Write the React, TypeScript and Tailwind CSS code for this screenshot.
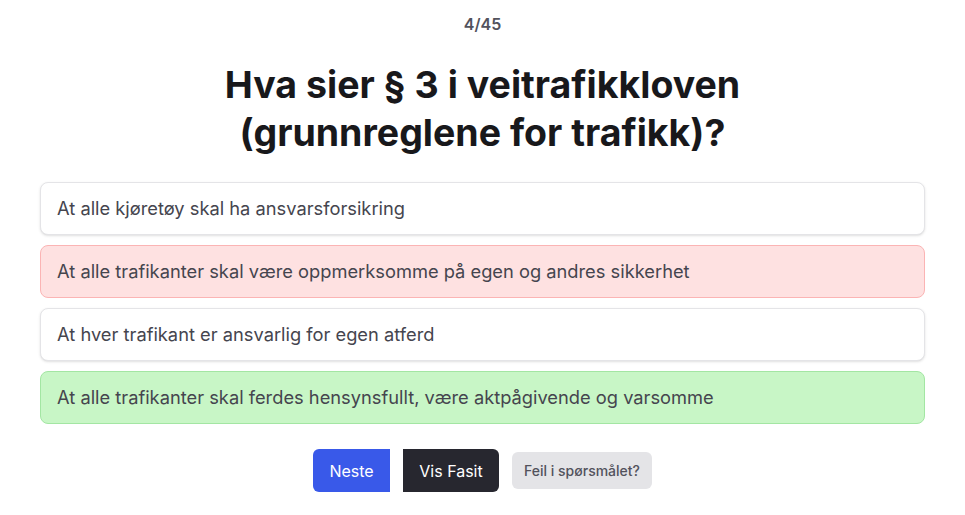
import React from "react";

const options = [
  { text: "At alle kjøretøy skal ha ansvarsforsikring", state: "idle" },
  {
    text: "At alle trafikanter skal være oppmerksomme på egen og andres sikkerhet",
    state: "wrong",
  },
  { text: "At hver trafikant er ansvarlig for egen atferd", state: "idle" },
  {
    text: "At alle trafikanter skal ferdes hensynsfullt, være aktpågivende og varsomme",
    state: "right",
  },
];

export default function App() {
  return (
    <div className="min-h-screen bg-white font-['Inter','Liberation_Sans',sans-serif] flex flex-col items-center px-10 pt-3">
      <div className="text-base leading-6 font-semibold text-zinc-600">4/45</div>

      <h1 className="mt-[25px] text-center text-[37.5px] leading-[48px] font-bold text-zinc-900">
        Hva sier § 3 i veitrafikkloven
        <br />
        (grunnreglene for trafikk)?
      </h1>

      <div className="mt-[25px] w-full flex flex-col gap-[10px]">
        {options.map((o) => (
          <div
            key={o.text}
            className={
              o.state === "wrong"
                ? "rounded-lg border border-[#fbb4b4] bg-[#fee1e1] px-4 py-3 text-[18.3px] leading-[27px] text-[#45454e]"
                : o.state === "right"
                ? "rounded-lg border border-[#a3e6a3] bg-[#c8f6c6] px-4 py-3 text-[18.3px] leading-[27px] text-[#45454e]"
                : "rounded-lg border border-zinc-200 bg-white shadow-sm px-4 py-3 text-[18.3px] leading-[27px] text-[#45454e]"
            }
          >
            {o.text}
          </div>
        ))}
      </div>

      <div className="mt-[25px] flex items-center gap-[13px]">
        <button className="h-[43px] w-[77px] rounded-l-md bg-[#3959e9] text-base text-white">
          Neste
        </button>
        <button className="h-[43px] w-[96px] rounded-r-md bg-[#27272f] text-base text-white">
          Vis Fasit
        </button>
        <button className="h-[37px] w-[140px] rounded-md bg-zinc-200 text-sm font-medium text-zinc-600">
          Feil i spørsmålet?
        </button>
      </div>
    </div>
  );
}
